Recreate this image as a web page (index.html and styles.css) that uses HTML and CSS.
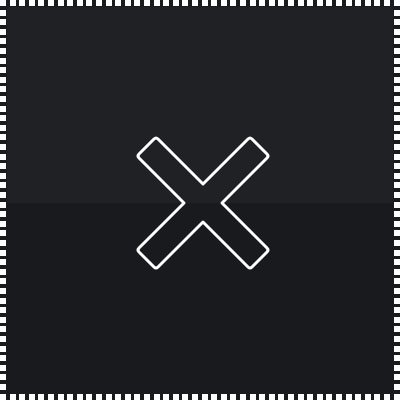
FILE: index.html
```html
<!DOCTYPE html>
<html lang="en">
<head>
    <meta charset="UTF-8" />
    <title>Close</title>
    <link rel="stylesheet" href="styles.css">
</head>
<body>
    <div class="frame">
        <svg class="close-icon" width="140" height="140" viewBox="-70 -70 140 140" aria-label="Close">
            <path d="M -64,-49 L -49,-64 Q -47,-66 -45,-64 L 0,-19 L 45,-64 Q 47,-66 49,-64 L 64,-49 Q 66,-47 64,-45 L 19,0 L 64,45 Q 66,47 64,49 L 49,64 Q 47,66 45,64 L 0,19 L -45,64 Q -47,66 -49,64 L -64,49 Q -66,47 -64,45 L -19,0 L -64,-45 Q -66,-47 -64,-49 Z"
                fill="none" stroke="#fff" stroke-width="3" stroke-linejoin="round" />
        </svg>
    </div>
</body>
</html>
```

FILE: styles.css
```css
* {
    box-sizing: border-box;
    margin: 0;
    padding: 0;
}

html,
body {
    width: 400px;
    height: 400px;
    overflow: hidden;
    background: #1c1d20;
}

/* square dotted edge drawn with stripes, content colour underneath */
.frame {
    width: 400px;
    height: 400px;
    padding: 6px 0 0 6px;
    border: 7px solid transparent;
    background:
        repeating-linear-gradient(to right, #fff 0 6px, transparent 6px 9.6px) top left / 100% 6px no-repeat border-box,
        repeating-linear-gradient(to right, #fff 0 6px, transparent 6px 9.6px) bottom left / 100% 6px no-repeat border-box,
        repeating-linear-gradient(to bottom, #fff 0 6px, transparent 6px 9.6px) top left / 6px 100% no-repeat border-box,
        repeating-linear-gradient(to bottom, #fff 0 6px, transparent 6px 9.6px) top right / 6px 100% no-repeat border-box,
        linear-gradient(to bottom, #202125 0 196px, #191a1d 196px 100%) padding-box,
        #1a1b1e;
    display: flex;
    align-items: center;
    justify-content: center;
}

.close-icon {
    display: block;
}
```
